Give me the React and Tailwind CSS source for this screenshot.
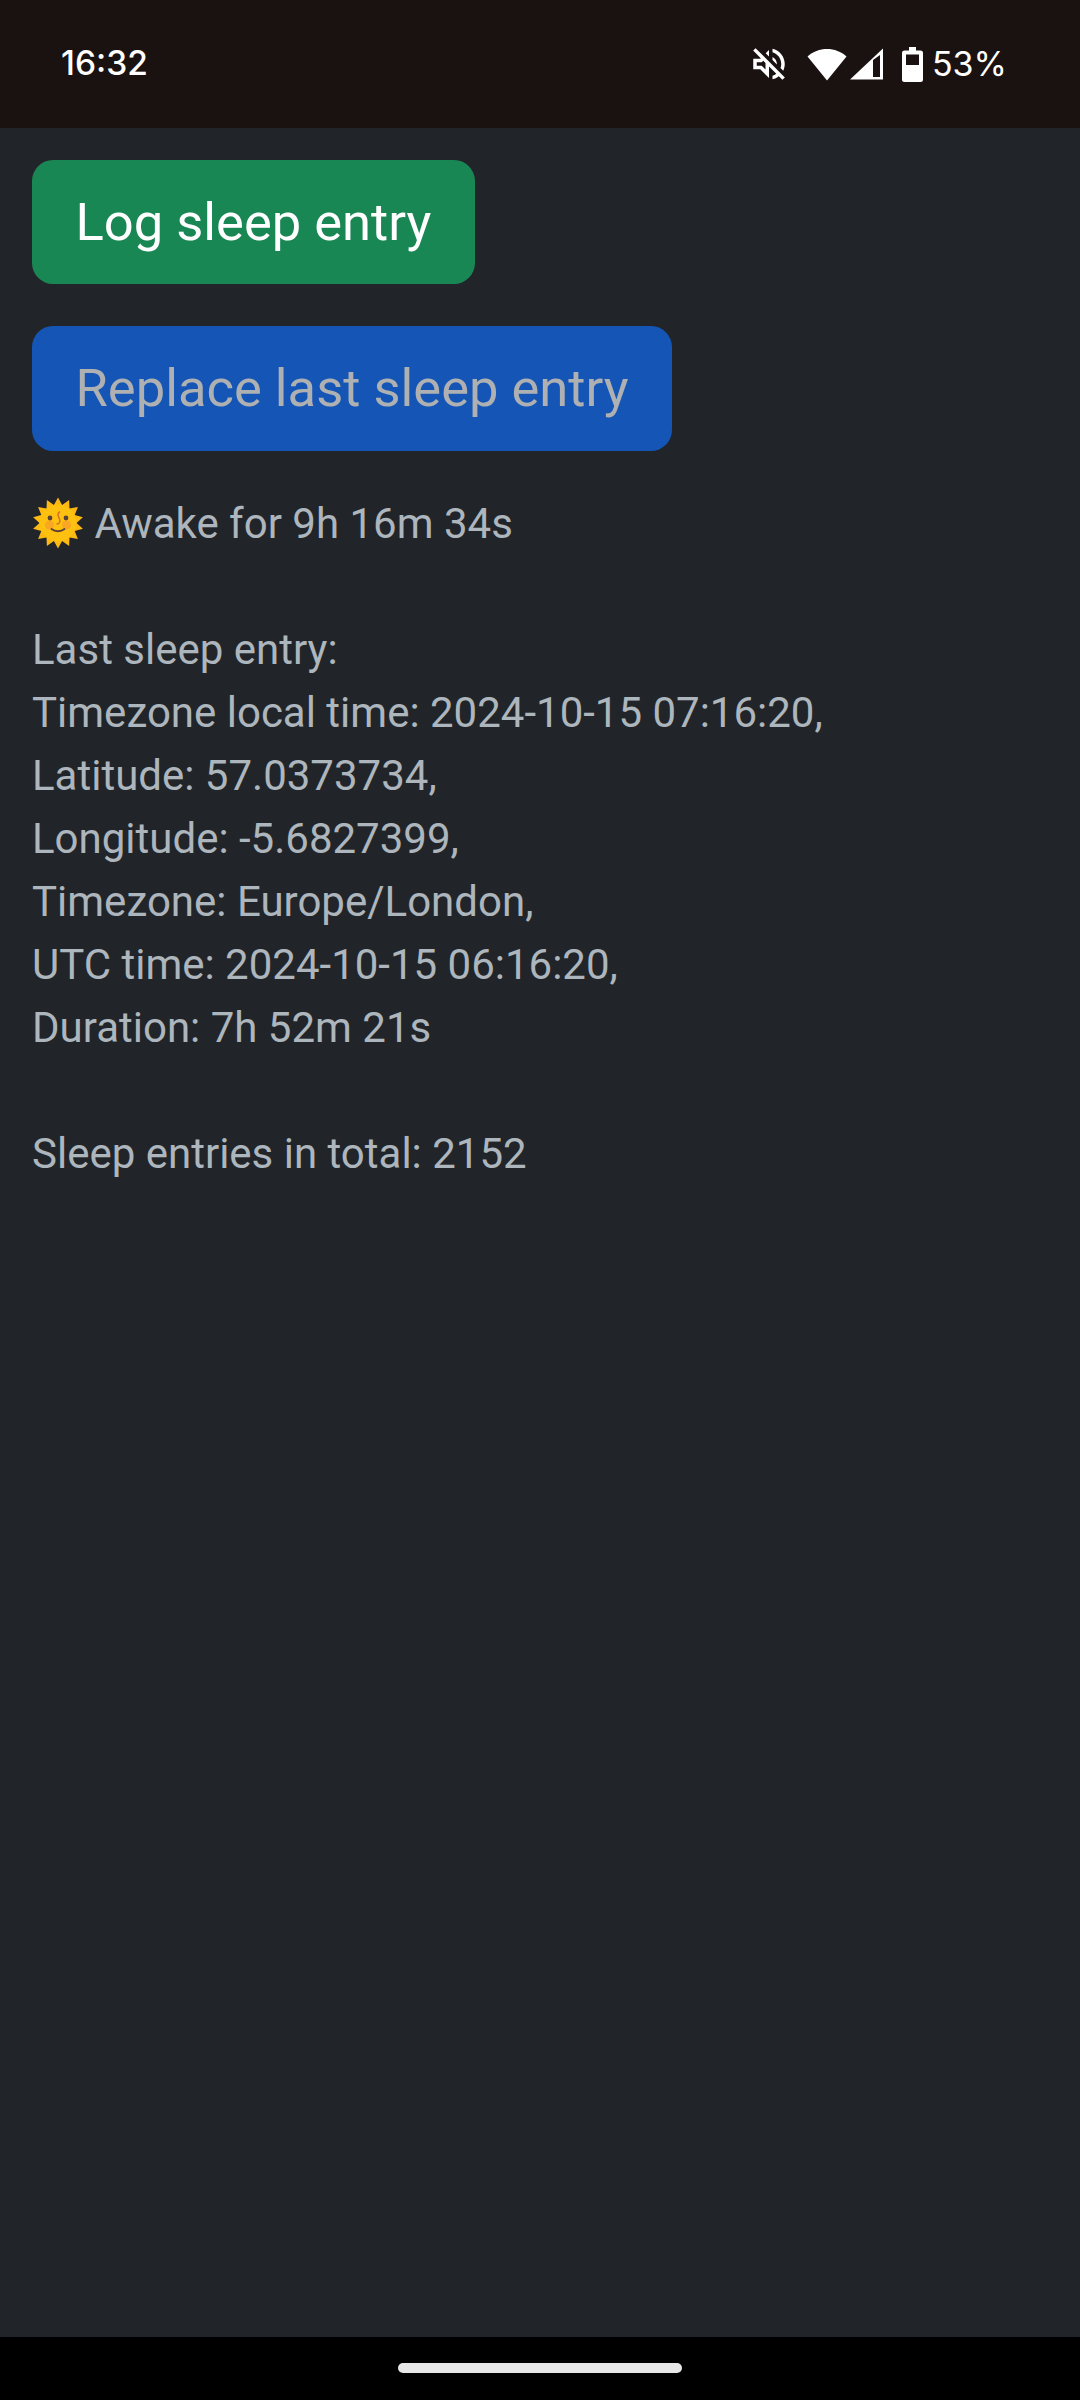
// Sleep tracker screen, phone-sized dark page

function sunPoints() {
  const pts = [];
  const spikes = 14;
  for (let i = 0; i < spikes * 2; i++) {
    const r = i % 2 === 0 ? 25.5 : 18.5;
    const a = ((i * 180) / spikes - 90) * (Math.PI / 180);
    pts.push(`${(26 + r * Math.cos(a)).toFixed(1)},${(26 + r * Math.sin(a)).toFixed(1)}`);
  }
  return pts.join(" ");
}

function SunFace() {
  return (
    <svg viewBox="0 0 52 52" className="inline-block w-[52px] h-[52px] align-[-11px]">
      <polygon points={sunPoints()} fill="#fdb813" />
      <circle cx="26" cy="26" r="18.5" fill="#fec110" />
      <circle cx="17.5" cy="28" r="4.5" fill="#f59a2e" opacity="0.7" />
      <circle cx="34.5" cy="28" r="4.5" fill="#f59a2e" opacity="0.7" />
      <circle cx="18" cy="21" r="2.4" fill="#5d4037" />
      <circle cx="34" cy="21" r="2.4" fill="#5d4037" />
      <path d="M27.5 15c-3 2-1 5 0 7s0 5-2.5 5" fill="none" stroke="#d9702a" strokeWidth="1.6" strokeLinecap="round" />
      <path d="M19.5 32c3.5 3 9.5 3 13 0" fill="none" stroke="#5d4037" strokeWidth="1.8" strokeLinecap="round" />
    </svg>
  );
}

function StatusBar() {
  return (
    <div className="h-[128px] bg-[#1a1111] flex items-center justify-between pl-[61px] pr-[73px] text-white font-[Inter] shrink-0">
      <span className="text-[33.5px] font-medium leading-none">16:32</span>
      <div className="flex items-center">
        <svg viewBox="0 0 24 24" className="w-[42px] h-[42px]" fill="#fff">
          <path d="M4.34 2.93L2.93 4.34 7.29 8.7 7 9H3v6h4l5 5v-6.59l4.18 4.18c-.65.49-1.38.88-2.18 1.11v2.06c1.34-.3 2.57-.92 3.61-1.75l2.05 2.05 1.41-1.41L4.34 2.93zM10 15.17L7.83 13H5v-2h2.83l.88-.88L10 11.41v3.76zM19 12c0 .82-.15 1.61-.41 2.34l1.53 1.53c.56-1.17.88-2.48.88-3.87 0-4.28-2.99-7.86-7-8.77v2.06c2.89.86 5 3.54 5 6.71zm-7-8l-1.88 1.88L12 7.76zm4.5 8c0-1.77-1.02-3.29-2.5-4.03v1.79l2.48 2.48c.01-.08.02-.16.02-.24z" />
        </svg>
        <svg viewBox="0 0 40 33" className="w-[40px] h-[33px] ml-[17px]">
          <path d="M0.5 8.5 C11 -1.5 29 -1.5 39.5 8.5 L20 32.5 Z" fill="#fff" />
        </svg>
        <svg viewBox="0 0 33 32" className="w-[33px] h-[32px] ml-[3px]">
          <path d="M0 31.5 L33 0.5 V31.5 Z" fill="#fff" />
          <polygon points="23,12 30,7 30,29 23,29" fill="#1a1111" />
        </svg>
        <svg viewBox="0 0 21 35" className="w-[21px] h-[35px] ml-[19px]">
          <path d="M7 0h7v3.5h4.5a2.5 2.5 0 0 1 2.5 2.5v26.5a2.5 2.5 0 0 1-2.5 2.5h-16A2.5 2.5 0 0 1 0 32.5V6a2.5 2.5 0 0 1 2.5-2.5H7z" fill="#fff" />
          <rect x="4" y="7.5" width="13" height="10.5" fill="#1a1111" />
        </svg>
        <span className="text-[34px] leading-none ml-[9px]">53%</span>
      </div>
    </div>
  );
}

const details = [
  "Last sleep entry:",
  "Timezone local time: 2024-10-15 07:16:20,",
  "Latitude: 57.0373734,",
  "Longitude: -5.6827399,",
  "Timezone: Europe/London,",
  "UTC time: 2024-10-15 06:16:20,",
  "Duration: 7h 52m 21s",
];

export default function App() {
  return (
    <div className="h-[2400px] flex flex-col bg-[#212529] font-[Roboto]">
      <StatusBar />

      <main className="flex-1 pt-8 px-8">
        <button className="block w-fit h-[124px] px-[43.5px] rounded-[21px] bg-[#198754] text-white text-[52.5px] leading-[78.75px]">
          Log sleep entry
        </button>
        <button className="block w-fit h-[125px] mt-[42px] px-[43.5px] rounded-[21px] bg-[#1555b5] text-[#aeb0b2] text-[52.5px] leading-[78.75px]">
          Replace last sleep entry
        </button>

        <div className="mt-[41px] text-[42px] leading-[63px] text-[#adb5bd]">
          <p><SunFace /> Awake for 9h 16m 34s</p>
          <div className="mt-[63px]">
            {details.map((line) => (
              <p key={line}>{line}</p>
            ))}
          </div>
          <p className="mt-[63px]">Sleep entries in total: 2152</p>
        </div>
      </main>

      <div className="h-[63px] bg-black flex justify-center pt-[26px] shrink-0">
        <div className="w-[284px] h-[10px] rounded-full bg-[#e8e8e8]" />
      </div>
    </div>
  );
}
